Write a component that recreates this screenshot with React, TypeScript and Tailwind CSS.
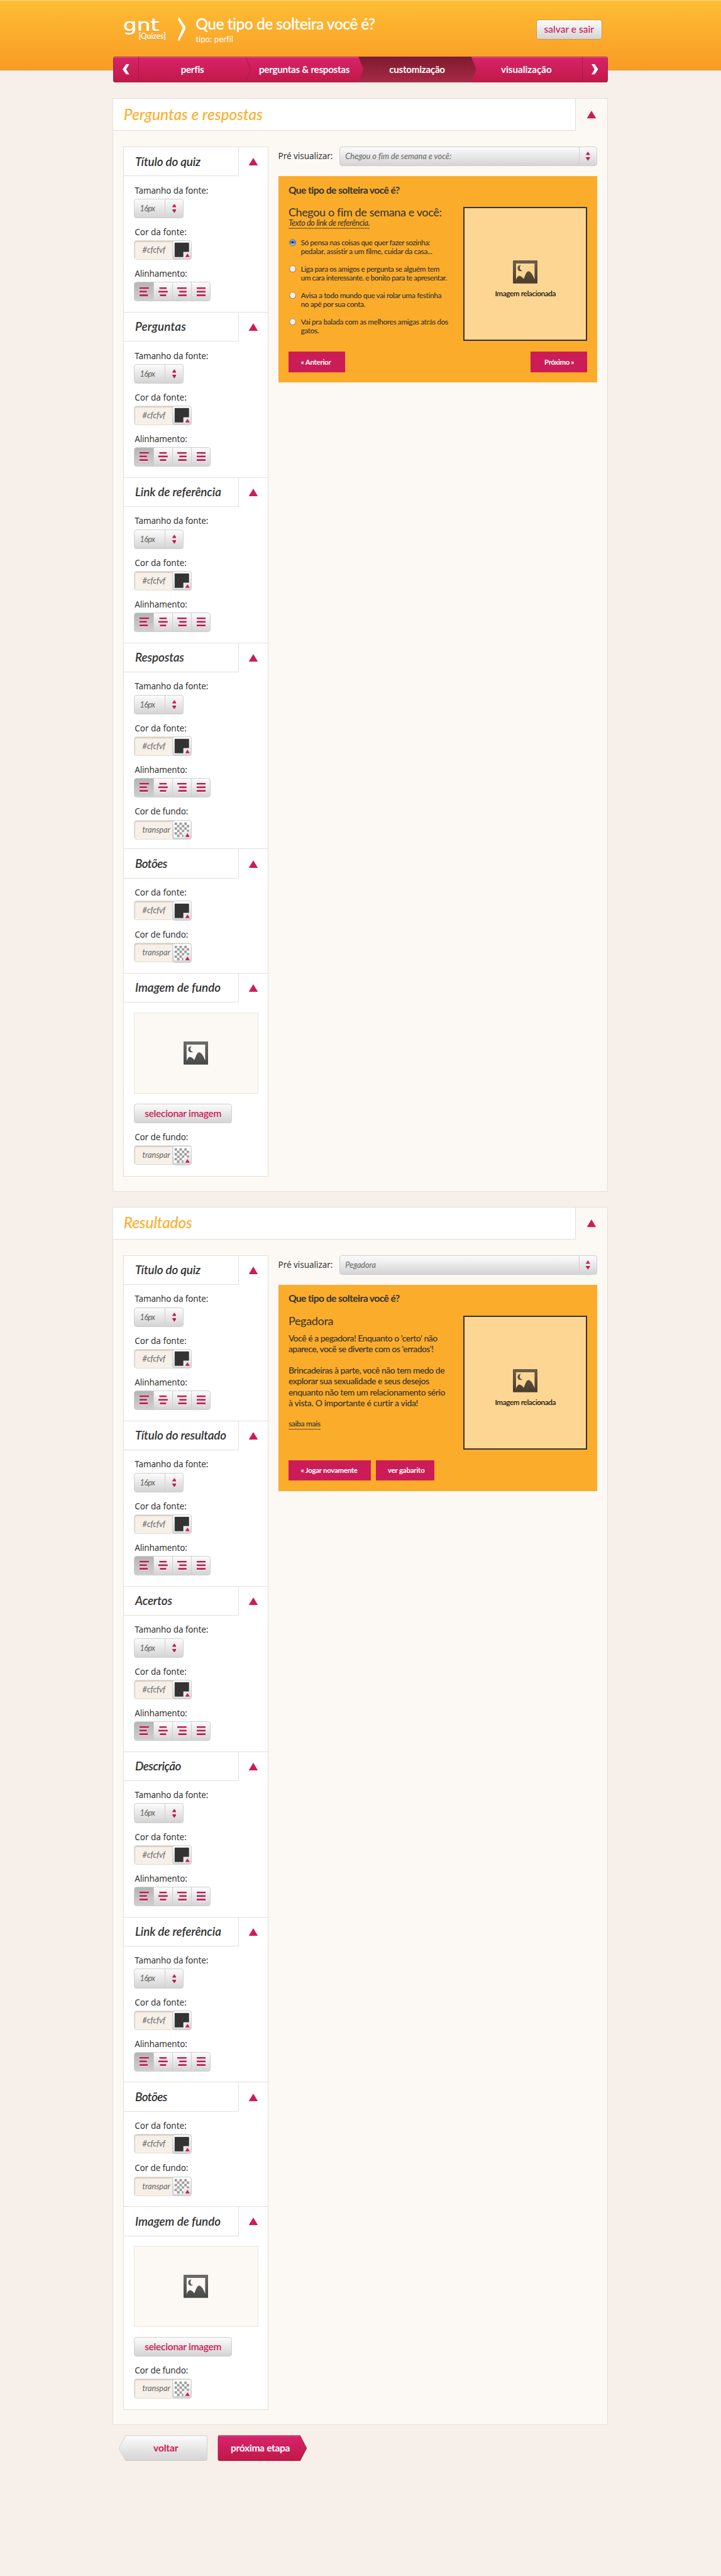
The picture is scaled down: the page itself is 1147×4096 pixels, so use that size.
import React, { useLayoutEffect, useRef, useState } from "react";

/* A single line of text whose tracking is adjusted to a given measure. */
function Fit({ w, children, className = "" }: { w: number; children: string; className?: string }) {
  const box = useRef<HTMLSpanElement>(null);
  const inner = useRef<HTMLSpanElement>(null);
  const [spacing, setSpacing] = useState(0);
  useLayoutEffect(() => {
    if (!box.current || !inner.current) return;
    const scale = box.current.getBoundingClientRect().width / w;
    const natural = inner.current.getBoundingClientRect().width / scale;
    setSpacing((w - natural) / children.length);
  }, [w, children]);
  return (
    <span ref={box} className={"inline-block whitespace-pre text-left " + className} style={{ width: w }}>
      <span ref={inner} style={{ letterSpacing: spacing }}>
        {children}
      </span>
    </span>
  );
}

function Triangle({ className = "" }: { className?: string }) {
  return (
    <svg viewBox="0 0 17 15" className={"h-[15px] w-[17px] " + className}>
      <path d="M8.5 0 L17 14 V15 H0 V14 Z" fill="#cc1c58" />
    </svg>
  );
}

function UpDown() {
  return (
    <svg viewBox="0 0 8 18" className="h-[18px] w-[8px]">
      <path d="M4 0 L8 6 V7 H0 V6 Z" fill="#cc1c58" />
      <path d="M0 11 H8 V12 L4 18 L0 12 Z" fill="#cc1c58" />
      <path d="M0 11 H8 V12 H0 Z" fill="#a11848" />
      <path d="M0 7 H8 V8 H0 Z" fill="#fff" />
    </svg>
  );
}

function PictureIcon({ warm = false }: { warm?: boolean }) {
  const id = warm ? "pic-warm" : "pic-gray";
  return (
    <svg viewBox="0 0 48 45" className="h-[45px] w-[48px]">
      <defs>
        <linearGradient id={id} x1="0" y1="0" x2="0" y2="45" gradientUnits="userSpaceOnUse">
          <stop offset="0" stopColor={warm ? "#6d5f4c" : "#6b6b6a"} />
          <stop offset="1" stopColor={warm ? "#4a3c2b" : "#484846"} />
        </linearGradient>
      </defs>
      <path
        fillRule="evenodd"
        d="M1 0 H47 Q48 0 48 1 V44 Q48 45 47 45 H1 Q0 45 0 44 V1 Q0 0 1 0 Z M6 6 V38 C7.5 33 10 30 12.5 30 C15.500 30 18 33 21 36 C23 32 25.500 21 30 21 C35 21 39 29 42 37 V6 Z"
        fill={`url(#${id})`}
      />
      <path d="M15.500 9.200 C7.500 8 6.500 21 15 21.200 Q17.500 21.200 18.800 19.800 C13 20 12 13 15.500 9.200 Z" fill={`url(#${id})`} />
    </svg>
  );
}

const greyButton = "border border-[#cfcfcf] rounded-[5px] bg-linear-to-b from-[#fcfcfc] to-[#d4d4d4]";

function Select({ text, w, className = "" }: { text: string; w: number; className?: string }) {
  return (
    <div className={"flex h-[38px] " + greyButton + " " + className}>
      <div className="flex flex-1 items-center pl-[10px] text-[15.500px] text-[#666] italic">
        <Fit w={w}>{text}</Fit>
      </div>
      <div className="flex w-[35px] items-center justify-center border-l border-[#cfcfcf]">
        <UpDown />
      </div>
    </div>
  );
}

function Swatch({ transparent }: { transparent: boolean }) {
  const squares = [];
  for (let r = 0; r < 6; r++)
    for (let c = 0; c < 6; c++)
      if ((r + c) % 2 === 0) squares.push(<rect key={`${r}-${c}`} x={1 + c * 4.7} y={1 + r * 4.7} width="4.7" height="4.7" fill="#9b9b9b" />);
  return (
    <svg viewBox="0 0 30 30" className="h-[30px] w-[30px]">
      <rect width="30" height="30" fill="#fff" />
      {transparent ? squares : <rect x="1" y="1" width="28" height="28" fill="#333" />}
      <path d="M18 30 V19 H30 V30 Z" fill="#fff" />
      <path d="M19 30 V20 H30 V30 Z" fill="#e6e6e6" />
      <path d="M26 22 L30 28 V29 H22 V28 Z" fill="#cc1c58" />
    </svg>
  );
}

function ColorField({ transparent = false }: { transparent?: boolean }) {
  return (
    <div className="flex h-[38px] w-[112px] rounded-[5px] border border-[#e3ddd2] bg-[#f7f0e9] shadow-[inset_1px_2px_1px_#d3ccc3]">
      <div className="flex w-[73px] items-center pl-[15px] text-[15.500px] text-[#666] italic">
        <Fit w={transparent ? 54 : 44.500}>{transparent ? "transpar" : "#cfcfvf"}</Fit>
      </div>
      <div className={"-mt-px -mr-px flex h-[38px] w-[38px] items-center justify-center " + greyButton}>
        <Swatch transparent={transparent} />
      </div>
    </div>
  );
}

const bars: number[][][] = [
  [[0, 18], [0, 14], [0, 16]],
  [[2, 14], [0, 18], [3, 12]],
  [[0, 18], [4, 14], [2, 16]],
  [[0, 18], [0, 18], [0, 18]],
];

function AlignField() {
  return (
    <div className={"flex h-[38px] w-[149px] overflow-hidden " + greyButton}>
      {bars.map((set, i) => (
        <div
          key={i}
          className={
            "flex w-[37px] items-center justify-center " +
            (i === 0 ? "bg-linear-to-b from-[#b5b5b5] to-[#cfcfcf]" : "border-l border-[#cfcfcf]")
          }
        >
          <svg viewBox="0 0 18 18" className="h-[18px] w-[18px]">
            {set.map(([x, w], r) => (
              <g key={r}>
                <rect x={x} y={r * 7 + 3} width={w} height="1" fill="#fff" />
                <rect x={x} y={r * 7} width={w} height="3" fill="#cc1c58" />
                <rect x={x} y={r * 7} width={w} height="1" fill="#a11848" />
              </g>
            ))}
          </svg>
        </div>
      ))}
    </div>
  );
}

type FieldKind = "size" | "color" | "align" | "bg";
const fieldLabel: Record<FieldKind, [string, number]> = {
  size: ["Tamanho da fonte:", 143],
  color: ["Cor da fonte:", 101],
  align: ["Alinhamento:", 102],
  bg: ["Cor de fundo:", 104],
};

function Field({ kind, className = "" }: { kind: FieldKind; className?: string }) {
  const [text, w] = fieldLabel[kind];
  return (
    <div className={className}>
      <div className="mb-[3px] h-[25px] pt-px pl-px font-['Noto_Sans',sans-serif] text-[16.500px] leading-[24px] text-[#333]">
        <Fit w={w}>{text}</Fit>
      </div>
      {kind === "size" && <Select text="16px" w={29} className="w-[96px]" />}
      {kind === "color" && <ColorField />}
      {kind === "bg" && <ColorField transparent />}
      {kind === "align" && <AlignField />}
    </div>
  );
}

function Block({ title, w, className, children }: { title: string; w: number; className: string; children: React.ReactNode }) {
  return (
    <section className={"border-t border-[#e3e0d9] " + className}>
      <div className="flex h-[57px]">
        <h3 className="flex w-[224px] items-center border-r border-b border-[#e3e0d9] pl-[22px] text-[23px] font-semibold text-[#333] italic">
          <Fit w={w}>{title}</Fit>
        </h3>
        <div className="flex flex-1 items-center justify-center">
          <Triangle />
        </div>
      </div>
      {children}
    </section>
  );
}

function StyleBlock({ title, w, bg = false }: { title: string; w: number; bg?: boolean }) {
  return (
    <Block title={title} w={w} className={bg ? "h-[400px]" : "h-[321px]"}>
      <div className="flex flex-col gap-[15px] pt-[15px] pl-[20px]">
        <Field kind="size" />
        <Field kind="color" />
        <Field kind="align" />
        {bg && <Field kind="bg" />}
      </div>
    </Block>
  );
}

function ButtonsBlock() {
  return (
    <Block title="Botões" w={62} className="h-[241px]">
      <div className="flex flex-col gap-[16px] pt-[15px] pl-[20px]">
        <Field kind="color" />
        <Field kind="bg" />
      </div>
    </Block>
  );
}

function ImageBlock() {
  return (
    <Block title="Imagem de fundo" w={166} className="h-[394px]">
      <div className="pt-[19px] pl-[19px]">
        <div className="flex h-[157px] w-[242px] items-center justify-center border-2 border-[#ebe7df] bg-[#fcf8f4]">
          <PictureIcon />
        </div>
        <div className="pl-px">
          <button className={"mt-[20px] flex h-[38px] w-[190px] items-center justify-center text-[19px] font-semibold text-[#cc1c58] " + greyButton}>
            <Fit w={149}>selecionar imagem</Fit>
          </button>
          <Field kind="bg" className="mt-[15px]" />
        </div>
      </div>
    </Block>
  );
}

function Panel({ title, w, className, children }: { title: string; w: number; className: string; children: React.ReactNode }) {
  return (
    <section className={"w-[962px] border border-[#e3e0d9] bg-[#fcf8f4] " + className}>
      <div className="flex h-[63px]">
        <h2 className="flex w-[898px] items-center border-r border-b border-[#e3e0d9] bg-white pl-[20px] text-[30px] font-medium text-[#fbb031] italic">
          <Fit w={w}>{title}</Fit>
        </h2>
        <div className="flex flex-1 items-center justify-center">
          <Triangle />
        </div>
      </div>
      <div className="flex items-start pt-[30px] pl-[19px]">{children}</div>
    </section>
  );
}

function Column({ children }: { children: React.ReactNode }) {
  return <div className="w-[282px] border-x border-b border-[#e3e0d9] bg-white">{children}</div>;
}

function Preview({ select, selectW, buttons, children }: { select: string; selectW: number; buttons: React.ReactNode; children: React.ReactNode }) {
  return (
    <div className="ml-[19px] w-[620px]">
      <div className="flex items-center justify-between">
        <span className="font-['Noto_Sans',sans-serif] text-[16.500px] text-[#333]">
          <Fit w={106}>Pré visualizar:</Fit>
        </span>
        <Select text={select} w={selectW} className="w-[501px]" />
      </div>
      <div className="mt-[20px] h-[400px] bg-[#fbac2a] px-[20px] pt-[15px] text-[#333]">
        <div className="h-[24px] text-[19px] leading-[24px] font-bold">
          <Fit w={216}>Que tipo de solteira você é?</Fit>
        </div>
        <div className="mt-[21px] flex h-[260px] justify-between">
          <div>{children}</div>
          <div className="flex h-[260px] w-[240px] shrink-0 flex-col items-center border-[2.500px] border-[#333] bg-[#fed693] pt-[101px]">
            <PictureIcon warm />
            <div className="mt-[10px] h-[20px] text-[14.500px] leading-[20px] font-medium text-black">
              <Fit w={118}>Imagem relacionada</Fit>
            </div>
          </div>
        </div>
        <div className="mt-[20px] flex h-[40px]">{buttons}</div>
      </div>
    </div>
  );
}

function PinkButton({ text, w, className }: { text: string; w: number; className: string }) {
  return (
    <button className={"flex h-[40px] items-center bg-[#cc1c58] text-[14px] font-bold text-white " + className}>
      <Fit w={w}>{text}</Fit>
    </button>
  );
}

function Radio({ on }: { on: boolean }) {
  return (
    <svg viewBox="0 0 16 16" className="h-[16px] w-[16px]">
      <defs>
        <linearGradient id="radio-off" x1="0" y1="0" x2="0" y2="1">
          <stop offset="0" stopColor="#fff" />
          <stop offset=".5" stopColor="#e9e9e9" />
          <stop offset="1" stopColor="#fff" />
        </linearGradient>
        <linearGradient id="radio-on" x1="0" y1="0" x2="0" y2="1">
          <stop offset="0" stopColor="#9fc0f0" />
          <stop offset=".45" stopColor="#3f83e0" />
          <stop offset="1" stopColor="#b5f0ff" />
        </linearGradient>
      </defs>
      <circle cx="8" cy="8.800" r="6.200" fill="#7a5a26" opacity=".5" />
      <circle cx="8" cy="8" r="5.900" fill={on ? "url(#radio-on)" : "url(#radio-off)"} stroke={on ? "#2a4a9a" : "#85755c"} strokeWidth=".8" />
      {on && <circle cx="8" cy="7.800" r="2" fill="#0a1030" />}
    </svg>
  );
}

const options: [string, number][][] = [
  [["Só pensa nas coisas que quer fazer sozinha:", 251], ["pedalar, assistir a um filme, cuidar da casa...", 255]],
  [["Liga para os amigos e pergunta se alguém tem", 269], ["um cara interessante. e bonito para te apresentar.", 283.500]],
  [["Avisa a todo mundo que vai rolar uma festinha", 273], ["no apê por sua conta.", 125]],
  [["Vai pra balada com as melhores amigas atrás dos", 286], ["gatos.", 35]],
];

const description: ([string, number] | null)[] = [
  ["Você é a pegadora! Enquanto o 'certo' não", 289],
  ["aparece, você se diverte com os 'errados'!", 281.500],
  null,
  ["Brincadeiras à parte, você não tem medo de", 303],
  ["explorar sua sexualidade e seus desejos", 273],
  ["enquanto não tem um relacionamento sério", 304],
  ["à vista. O importante é curtir a vida!", 252],
];

function NavArrow({ flip = false }: { flip?: boolean }) {
  return (
    <svg viewBox="0 0 13 20" className={"h-[20px] w-[13px] " + (flip ? "-scale-x-100" : "")}>
      <path d="M0 10 L7 0 H13 L7 10 L13 20 H7 Z" fill="#fff" />
    </svg>
  );
}

function Header() {
  return (
    <header className="h-[137px] border-t-[2.500px] border-b border-t-[#fdcb5f] border-b-[#e39a3c] bg-linear-to-b from-[#fdbd35] to-[#f99b23]">
      <div className="ml-[220px] flex w-[960px] items-start">
        <svg viewBox="0 0 90 66" className="mt-[22px] ml-[18px] h-[66px] w-[90px] overflow-visible">
          <g fill="#fff" className="drop-shadow-[0_1px_0_#d98a20]">
            <text x="1" y="35.500" fontSize="33" textLength="70" lengthAdjust="spacingAndGlyphs" fontFamily="DejaVu Sans, sans-serif" stroke="#fff" strokeWidth=".8">
              gnt
            </text>
            <text x="31" y="51.500" fontSize="15.500" textLength="53" lengthAdjust="spacingAndGlyphs" fontFamily="Lato, sans-serif" fontWeight="700">
              [Quizes]
            </text>
          </g>
        </svg>
        <svg viewBox="0 0 15 47" className="mt-[31px] ml-[17px] h-[47px] w-[15px]">
          <path d="M2 0 L15 19.500 V23 L2 47 L0 43 L9.500 21 L0 4.500 Z" fill="#fff" />
        </svg>
        <div className="mt-[26px] ml-[20px] text-white">
          <h1 className="h-[36px] text-[30px] leading-[36px] font-semibold">
            <Fit w={349}>Que tipo de solteira você é?</Fit>
          </h1>
          <div className="h-[22px] text-[16px] leading-[22px]">
            <Fit w={73}>tipo: perfil</Fit>
          </div>
        </div>
        <button className="mt-[36px] mr-[11px] ml-auto flex h-[38px] w-[128px] items-center justify-center rounded-[5px] border border-[#dc9536] bg-linear-to-b from-[#fcfcfc] to-[#d4d4d4] text-[19px] font-medium text-[#cc1c58]">
          <Fit w={97}>salvar e sair</Fit>
        </button>
      </div>
    </header>
  );
}

function Nav() {
  return (
    <nav className="relative -mt-[27px] ml-[220px] flex h-[50px] w-[960px] overflow-hidden rounded-[5px] bg-linear-to-b from-[#d8236c] to-[#c11847] text-[18.500px] font-bold text-white shadow-[inset_0_0_0_1px_#a01c48,inset_0_2px_0_#e06a9b]">
      <div className="flex w-[50px] items-center justify-center border-r border-[#a01c48]">
        <NavArrow />
      </div>
      <div className="flex w-[207px] items-center justify-center">
        <Fit w={44.500}>perfis</Fit>
      </div>
      <svg viewBox="0 0 10 50" className="h-[50px] w-[10px]">
        <path d="M0 1 L9.500 25 L0 49" fill="none" stroke="#a01c48" />
      </svg>
      <div className="flex w-[209px] items-center pl-[16px]">
        <Fit w={176}>perguntas &amp; respostas</Fit>
      </div>
      <div className="flex w-[229px] items-center bg-linear-to-b from-[#7d1a2e] to-[#a92a48] pl-[60px] [clip-path:polygon(0_0,219px_0,229px_50%,219px_100%,0_100%,10px_50%)]">
        <Fit w={108}>customização</Fit>
      </div>
      <div className="flex w-[205px] items-center pl-[48px]">
        <Fit w={98.500}>visualização</Fit>
      </div>
      <div className="flex w-[50px] items-center justify-center border-l border-[#a01c48]">
        <NavArrow flip />
      </div>
    </nav>
  );
}

export default function App() {
  return (
    <div className="h-[5000px] w-full overflow-hidden bg-[#f7f0ea] font-[Lato,sans-serif] [zoom:0.8192]">
      <Header />
      <Nav />
      <main className="ml-[219px] pt-[30px]">
        <Panel title="Perguntas e respostas" w={270} className="h-[2123px]">
          <Column>
            <StyleBlock title="Título do quiz" w={127} />
            <StyleBlock title="Perguntas" w={99} />
            <StyleBlock title="Link de referência" w={167} />
            <StyleBlock title="Respostas" w={95} bg />
            <ButtonsBlock />
            <ImageBlock />
          </Column>
          <Preview
            select="Chegou o fim de semana e você:"
            selectW={206}
            buttons={
              <>
                <PinkButton text="« Anterior" w={58.500} className="w-[110px] pl-[24px]" />
                <PinkButton text="Próximo »" w={57.500} className="ml-auto w-[110px] pl-[27px]" />
              </>
            }
          >
            <div className="-mt-px h-[20px] text-[22px] leading-[20px]">
              <Fit w={297}>Chegou o fim de semana e você:</Fit>
            </div>
            <div className="mt-[3px] flex">
              <a className="block h-[20px] border-b-[2.500px] border-[#a8772d] text-[15.500px] leading-[19px] italic">
                <Fit w={158}>Texto do link de referência.</Fit>
              </a>
            </div>
            <ul className="mt-[19px] flex flex-col gap-[17px]">
              {options.map((lines, i) => (
                <li key={i} className="flex">
                  <span className="w-[24px]">
                    <Radio on={i === 0} />
                  </span>
                  <span className="flex flex-col text-[14.500px] leading-[17px] font-medium">
                    {lines.map(([t, w]) => (
                      <Fit key={t} w={w} className="h-[17px]">
                        {t}
                      </Fit>
                    ))}
                  </span>
                </li>
              ))}
            </ul>
          </Preview>
        </Panel>

        <Panel title="Resultados" w={133} className="mt-[29px] h-[2365px]">
          <Column>
            <StyleBlock title="Título do quiz" w={127} />
            <StyleBlock title="Título do resultado" w={177} />
            <StyleBlock title="Acertos" w={72} />
            <StyleBlock title="Descrição" w={89} />
            <StyleBlock title="Link de referência" w={167} />
            <ButtonsBlock />
            <ImageBlock />
          </Column>
          <Preview
            select="Pegadora"
            selectW={59.500}
            buttons={
              <>
                <PinkButton text="« Jogar novamente" w={110} className="w-[160px] pl-[24px]" />
                <PinkButton text="ver gabarito" w={71.500} className="ml-[10px] w-[113px] pl-[23px]" />
              </>
            }
          >
            <div className="h-[20px] text-[22px] leading-[20px]">
              <Fit w={87}>Pegadora</Fit>
            </div>
            <div className="mt-[12px] flex flex-col text-[17px] leading-[21px] font-medium">
              {description.map((line, i) =>
                line ? (
                  <Fit key={i} w={line[1]} className="h-[21px]">
                    {line[0]}
                  </Fit>
                ) : (
                  <span key={i} className="h-[21px]" />
                ),
              )}
            </div>
            <div className="mt-[22px] flex">
              <a className="block h-[19px] border-b border-[#6e532f] text-[15px] leading-[18px] font-medium">
                <Fit w={62}>saiba mais</Fit>
              </a>
            </div>
          </Preview>
        </Panel>

        <div className="mt-[20px] ml-[11px] flex gap-[20px] text-[19px] font-bold">
          <button className="flex h-[50px] w-[173px] rounded-r-[5px] bg-[#cfcfcf] p-px text-[#cc1c58] [clip-path:polygon(14px_0,100%_0,100%_100%,14px_100%,0_50%)]">
            <span className="flex h-[48px] w-[171px] items-center rounded-r-[4px] bg-linear-to-b from-[#fcfcfc] to-[#d4d4d4] pl-[67px] [clip-path:polygon(14px_0,100%_0,100%_100%,14px_100%,0_50%)]">
              <Fit w={48}>voltar</Fit>
            </span>
          </button>
          <button className="flex h-[50px] w-[173px] rounded-l-[5px] bg-[#a01c48] p-px text-white [clip-path:polygon(0_0,160px_0,100%_50%,160px_100%,0_100%)]">
            <span className="flex h-[48px] w-[171px] items-center rounded-l-[4px] bg-linear-to-b from-[#d8236c] to-[#c11847] pl-[24px] shadow-[inset_0_1px_0_#e06a9b] [clip-path:polygon(0_0,158px_0,100%_50%,158px_100%,0_100%)]">
              <Fit w={115}>próxima etapa</Fit>
            </span>
          </button>
        </div>
      </main>
    </div>
  );
}
